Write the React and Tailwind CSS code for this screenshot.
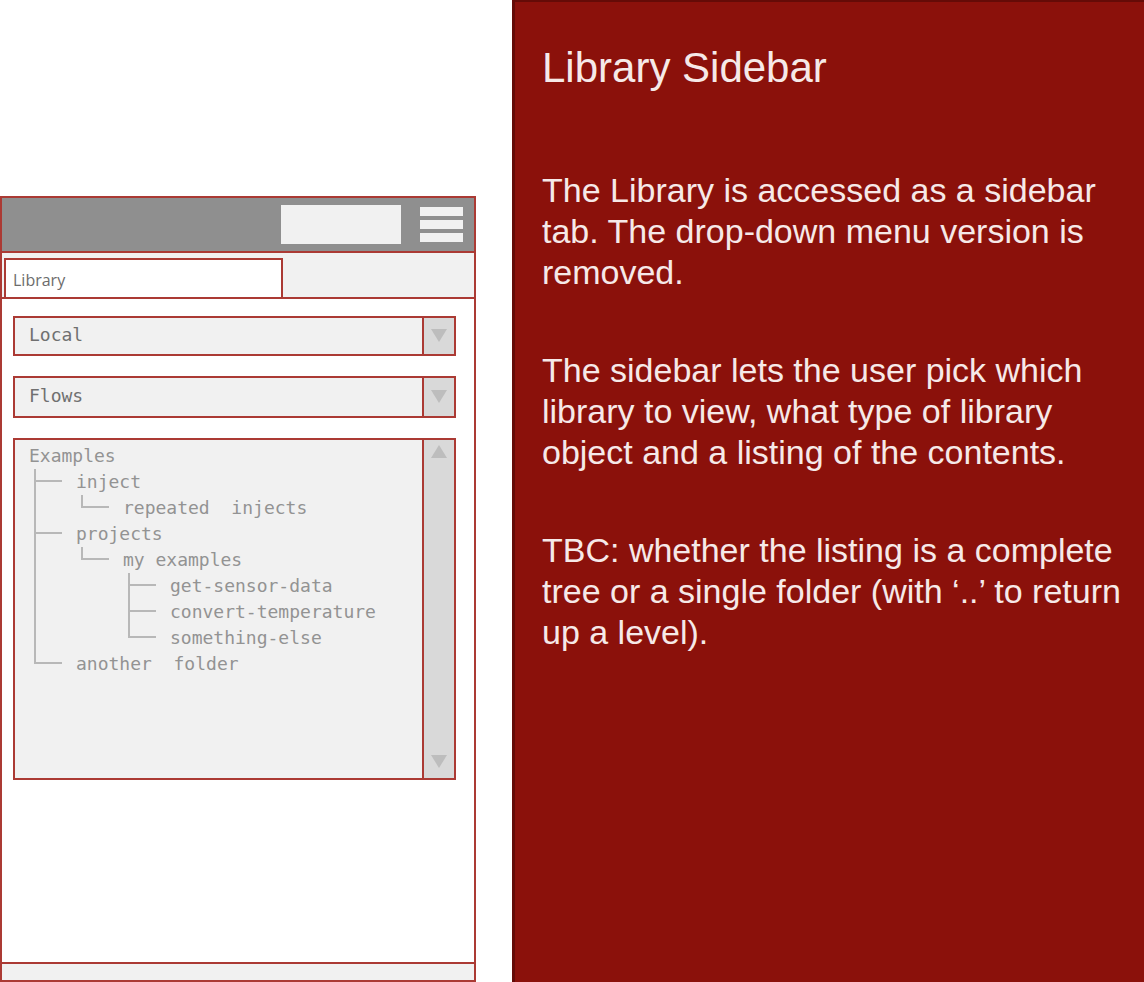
const tree = {
  label: 'Examples',
  children: [
    { label: 'inject', children: [{ label: 'repeated\u00a0 injects' }] },
    {
      label: 'projects',
      children: [
        {
          label: 'my examples',
          children: [
            { label: 'get-sensor-data' },
            { label: 'convert-temperature' },
            { label: 'something-else' },
          ],
        },
      ],
    },
    { label: 'another\u00a0 folder' },
  ],
};

function Branch({ nodes }) {
  return (
    <ul className="ml-[5px]">
      {nodes.map((node, i) => (
        <li key={node.label} className="flex">
          <span className="flex w-[42px] shrink-0 flex-col" aria-hidden="true">
            <span className="h-[13px] w-7 border-b-2 border-l-2 border-[#b8b8b8]" />
            {i < nodes.length - 1 && <span className="flex-1 border-l-2 border-[#b8b8b8]" />}
          </span>
          <div>
            <div className="h-[26px]">{node.label}</div>
            {node.children && <Branch nodes={node.children} />}
          </div>
        </li>
      ))}
    </ul>
  );
}

function Triangle({ up = false }) {
  return (
    <svg viewBox="0 0 16 13" className="h-[13px] w-4" aria-hidden="true">
      <path d={up ? 'M8 0 16 13H0Z' : 'M0 0H16L8 13Z'} fill="#bdbdbd" />
    </svg>
  );
}

function Dropdown({ label, options, className }) {
  return (
    <div className={`relative border-2 border-[#ab3a34] ${className}`}>
      <select
        aria-label={label}
        className="block h-full w-full appearance-none bg-[#f1f1f1] pr-10 pb-0.5 pl-[14px] text-lg leading-6 text-[#707070] outline-none"
      >
        {options.map((option) => (
          <option key={option}>{option}</option>
        ))}
      </select>
      <span className="pointer-events-none absolute inset-y-0 right-0 flex w-8 items-center justify-center border-l-2 border-[#ab3a34] bg-[#d9d9d9] pb-0.5">
        <Triangle />
      </span>
    </div>
  );
}

function Sidebar() {
  return (
    <section className="mr-9 flex flex-1 flex-col border-2 border-[#ab3a34] bg-white font-['DejaVu_Sans_Mono',monospace]">
      <header className="flex h-[55px] items-center justify-end gap-[19px] border-b-2 border-[#ab3a34] bg-[#8f8f8f] pr-[11px]">
        <button type="button" aria-label="Deploy" className="h-[39px] w-[120px] bg-[#f1f1f1]" />
        <button type="button" aria-label="Menu" className="flex w-[43px] flex-col gap-1">
          <span className="h-[9px] w-full bg-[#f1f1f1]" />
          <span className="h-[9px] w-full bg-[#f1f1f1]" />
          <span className="h-[9px] w-full bg-[#f1f1f1]" />
        </button>
      </header>

      <nav className="flex h-[46px] items-end border-b-2 border-[#ab3a34] bg-[#f1f1f1] pl-0.5">
        <button
          type="button"
          className="h-[39px] w-[279px] border-2 border-b-0 border-[#ab3a34] bg-white pt-0.5 pl-[7px] text-left font-['Open_Sans',sans-serif] text-base text-[#6c6c6c]"
        >
          Library
        </button>
      </nav>

      <div className="flex flex-1 flex-col gap-5 pt-[17px] pr-[18px] pl-[11px]">
        <Dropdown label="Library source" options={['Local']} className="h-10" />
        <Dropdown label="Object type" options={['Flows']} className="h-[42px]" />
        <div className="flex h-[342px] border-2 border-[#ab3a34] bg-[#f1f1f1]">
          <div className="flex-1 pt-[3px] pl-[14px] text-lg leading-[26px] whitespace-nowrap text-[#939393]">
            <div>{tree.label}</div>
            <Branch nodes={tree.children} />
          </div>
          <div className="flex w-8 flex-col items-center justify-between border-l-2 border-[#ab3a34] bg-[#d9d9d9] pt-[5px] pb-[10px]">
            <button type="button" aria-label="Scroll up">
              <Triangle up />
            </button>
            <button type="button" aria-label="Scroll down">
              <Triangle />
            </button>
          </div>
        </div>
      </div>

      <footer className="h-[18px] border-t-2 border-[#ab3a34] bg-[#f1f1f1]" />
    </section>
  );
}

export default function App() {
  return (
    <main className="grid min-h-screen grid-cols-[512fr_632fr] bg-white">
      <div className="flex min-w-0 flex-col pt-[196px]">
        <Sidebar />
      </div>
      <article className="min-w-0 border-t-2 border-l-3 border-[#650b07] bg-[#8b110b] pt-[42px] pr-4 pl-[27px] font-['Liberation_Sans',Arial,sans-serif] text-[#f6e9e8]">
        <h1 className="text-[42px] leading-[48px]">Library Sidebar</h1>
        <div className="mt-[78px] flex flex-col gap-[57px] text-[34px] leading-[41px]">
          <p>The Library is accessed as a sidebar tab. The drop-down menu version is removed.</p>
          <p>
            The sidebar lets the user pick which library to view, what type of library object and a
            listing of the contents.
          </p>
          <p>
            TBC: whether the listing is a complete tree or a single folder (with ‘..’ to return up a
            level).
          </p>
        </div>
      </article>
    </main>
  );
}
